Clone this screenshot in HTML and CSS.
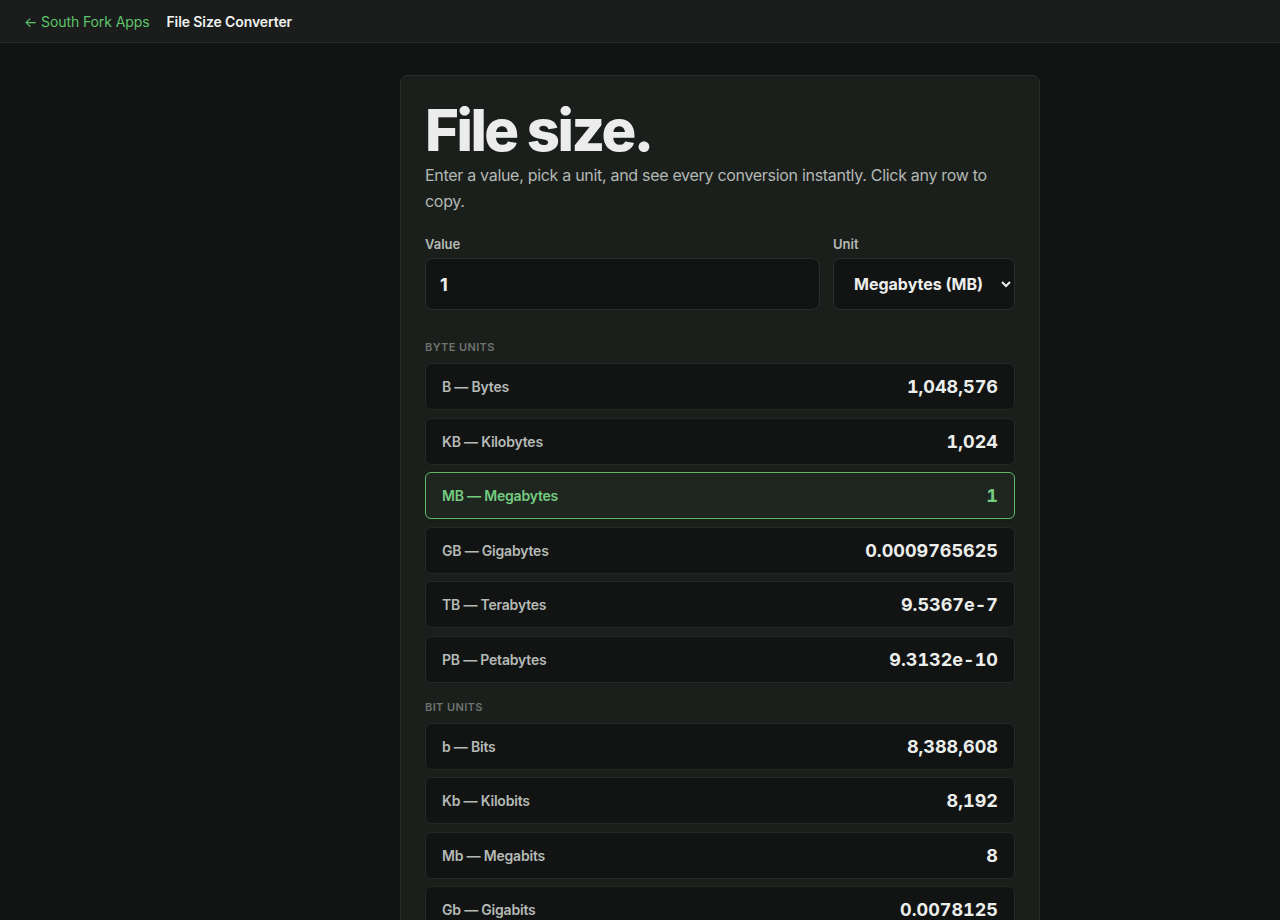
FILE: index.html
```html
<!DOCTYPE html>
<html lang="en">
<head>
    <meta charset="UTF-8">
    <meta name="viewport" content="width=device-width, initial-scale=1.0">
    <title>File Size Converter</title>
    <link rel="stylesheet" href="styles.css">
</head>
<body>
    <header class="topbar">
        <a class="back" href="#">← South Fork Apps</a>
        <span class="app-name">File Size Converter</span>
    </header>

    <main class="card">
        <h1>File size.</h1>
        <p class="intro">Enter a value, pick a unit, and see every conversion instantly. Click any row to copy.</p>

        <div class="controls">
            <div class="field grow">
                <label for="value">Value</label>
                <input type="text" id="value" value="1">
            </div>
            <div class="field">
                <label for="unit">Unit</label>
                <select id="unit">
                    <option>Bytes (B)</option>
                    <option>Kilobytes (KB)</option>
                    <option selected>Megabytes (MB)</option>
                    <option>Gigabytes (GB)</option>
                    <option>Terabytes (TB)</option>
                    <option>Petabytes (PB)</option>
                </select>
            </div>
        </div>

        <h2 class="group">Byte units</h2>
        <div class="rows">
            <div class="row"><span class="name">B — Bytes</span><span class="num">1,048,576</span></div>
            <div class="row"><span class="name">KB — Kilobytes</span><span class="num">1,024</span></div>
            <div class="row active"><span class="name">MB — Megabytes</span><span class="num">1</span></div>
            <div class="row"><span class="name">GB — Gigabytes</span><span class="num">0.0009765625</span></div>
            <div class="row"><span class="name">TB — Terabytes</span><span class="num">9.5367e-7</span></div>
            <div class="row"><span class="name">PB — Petabytes</span><span class="num">9.3132e-10</span></div>
        </div>

        <h2 class="group">Bit units</h2>
        <div class="rows">
            <div class="row"><span class="name">b — Bits</span><span class="num">8,388,608</span></div>
            <div class="row"><span class="name">Kb — Kilobits</span><span class="num">8,192</span></div>
            <div class="row"><span class="name">Mb — Megabits</span><span class="num">8</span></div>
            <div class="row"><span class="name">Gb — Gigabits</span><span class="num">0.0078125</span></div>
            <div class="row"><span class="name">Tb — Terabits</span><span class="num">7.6294e-6</span></div>
            <div class="row"><span class="name">Pb — Petabits</span><span class="num">7.4506e-9</span></div>
        </div>
    </main>
</body>
</html>
```

FILE: styles.css
```css
body {
    margin: 0;
    background-color: #121413;
    color: #e8eae8;
    font-family: Inter, "Noto Sans", sans-serif;
}

.topbar {
    display: flex;
    align-items: center;
    gap: 17px;
    height: 42px;
    padding: 0 24px;
    background-color: #1a1d1b;
    border-bottom: 1px solid #272b28;
    font-size: 14px;
    letter-spacing: -0.1px;
}

.back {
    color: #5fc46c;
    text-decoration: none;
}

.app-name {
    color: #f0f2f0;
    font-weight: 600;
}

.card {
    width: 590px;
    margin: 32px 0 0 400px;
    padding: 24px 24px 40px;
    background-color: #1b1f1c;
    border: 1px solid #2a2e2b;
    border-radius: 8px;
}

h1 {
    margin: 0;
    font-size: 58px;
    line-height: 60px;
    font-weight: 800;
    letter-spacing: -2.5px;
    color: #ececec;
}

.intro {
    margin: 2px 0 0;
    font-size: 16px;
    line-height: 26px;
    color: #b3b8b4;
    letter-spacing: -0.3px;
}

.controls {
    display: flex;
    gap: 13px;
    margin: 22px 0 30px;
}

.field {
    display: flex;
    flex-direction: column;
    gap: 6px;
}

.grow {
    flex: 1;
}

label {
    font-size: 13px;
    font-weight: 600;
    color: #b5bab6;
}

input, select {
    height: 52px;
    box-sizing: border-box;
    background-color: #121413;
    border: 1px solid #2a2e2b;
    border-radius: 8px;
    color: #eceeec;
    font-family: inherit;
    font-weight: 700;
    outline: none;
}

input {
    padding: 0 14px;
    font-size: 18px;
}

select {
    width: 182px;
    padding: 0 8px 0 16px;
    font-size: 16px;
}

.group {
    margin: 17px 0 9px;
    font-size: 11px;
    font-weight: 600;
    text-transform: uppercase;
    letter-spacing: 0.4px;
    color: #6d736f;
}

.rows {
    display: flex;
    flex-direction: column;
    gap: 7.5px;
}

.row {
    display: flex;
    justify-content: space-between;
    align-items: center;
    height: 47px;
    box-sizing: border-box;
    padding: 0 16px;
    background-color: #121413;
    border: 1px solid #262a27;
    border-radius: 6px;
    cursor: pointer;
}

.name {
    font-size: 14px;
    font-weight: 600;
    color: #b5bab6;
    letter-spacing: -0.2px;
}

.num {
    font-size: 18px;
    font-weight: 700;
    color: #eceeec;
    font-variant-numeric: tabular-nums;
}

.row.active {
    background-color: #1f2620;
    border-color: #5db868;
}

.row.active .name,
.row.active .num {
    color: #74cc80;
}
```
